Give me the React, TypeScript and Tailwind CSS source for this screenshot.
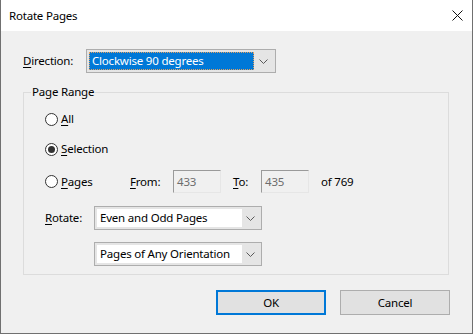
import * as React from "react";

const FONT = { fontFamily: '"Noto Sans", "Liberation Sans", sans-serif' };

function Chevron() {
  return (
    <svg width="9" height="5" viewBox="0 0 9 5" className="shrink-0">
      <path d="M0.5 0.5 L4.5 4.5 L8.5 0.5" fill="none" stroke="#5a5a5a" strokeWidth="1" />
    </svg>
  );
}

function Radio({ checked }: { checked?: boolean }) {
  return (
    <span className="relative flex h-[13px] w-[13px] shrink-0 items-center justify-center rounded-full border border-[#333333] bg-white">
      {checked && <span className="h-[7px] w-[7px] rounded-full bg-[#333333]" />}
    </span>
  );
}

function Key({ k, rest }: { k: string; rest: string }) {
  return (
    <span>
      <span className="underline underline-offset-2">{k}</span>
      {rest}
    </span>
  );
}

function Select({ value, width }: { value: string; width: string }) {
  return (
    <div className={`flex h-[24px] ${width} items-center border border-[#adadad] bg-[#e5e5e5] p-[2px]`}>
      <div className="flex h-full flex-1 items-center bg-white pl-[3px]">{value}</div>
      <div className="flex w-[17px] items-center justify-center">
        <Chevron />
      </div>
    </div>
  );
}

function Disabled({ value }: { value: string }) {
  return (
    <div className="flex h-[23px] w-[48px] items-center border-t border-l border-[#9a9a9a] border-r-[#e6e6e6] border-b-[#e6e6e6] border-r border-b bg-[#f0f0f0] pl-[3px] text-[#6d6d6d]">
      {value}
    </div>
  );
}

export default function App() {
  return (
    <div
      className="flex h-[334px] w-[473px] flex-col border-x border-b border-[#707070] text-[11.5px] leading-[16px] tracking-[-0.2px] text-black"
      style={FONT}
    >
      <div className="flex h-[31px] shrink-0 items-center justify-between bg-white pl-[8px] pr-[9px]">
        <span>Rotate Pages</span>
        <svg width="11" height="11" viewBox="0 0 11 11">
          <path d="M0.5 0.5 L10.5 10.5 M10.5 0.5 L0.5 10.5" stroke="#111" strokeWidth="1" />
        </svg>
      </div>

      <div className="flex flex-1 flex-col bg-[#f0f0f0] px-[22px] pt-[18px]">
        <div className="flex h-[24px] items-center">
          <span className="w-[63px]">
            <Key k="D" rest="irection:" />
          </span>
          <div className="flex h-[24px] w-[190px] items-center border border-[#adadad] bg-[#e5e5e5] p-[2px]">
            <div className="flex h-full flex-1 items-center border border-dotted border-[#e0a060] bg-[#0078d7] pl-[2px] text-white">
              Clockwise 90 degrees
            </div>
            <div className="flex w-[19px] items-center justify-center">
              <Chevron />
            </div>
          </div>
        </div>

        <div className="relative mt-[19px] h-[183px] w-[426px] border border-[#dcdcdc] pl-[21px] pt-[18px]">
          <span className="absolute left-[7px] top-[-9px] bg-[#f0f0f0] px-[1px]">Page Range</span>

          <div className="flex h-[16px] items-center gap-[3px]">
            <Radio />
            <Key k="A" rest="ll" />
          </div>

          <div className="mt-[14px] flex h-[16px] items-center gap-[3px]">
            <Radio checked />
            <Key k="S" rest="election" />
          </div>

          <div className="mt-[13px] flex h-[23px] items-center">
            <div className="flex w-[85px] items-center gap-[3px]">
              <Radio />
              <Key k="P" rest="ages" />
            </div>
            <span className="w-[43px]">
              <Key k="F" rest="rom:" />
            </span>
            <Disabled value="433" />
            <span className="ml-[12px] w-[28px]">
              <Key k="T" rest="o:" />
            </span>
            <Disabled value="435" />
            <span className="ml-[12px]">of 769</span>
          </div>

          <div className="mt-[13px] flex items-center">
            <span className="w-[49px]">
              <Key k="R" rest="otate:" />
            </span>
            <Select value="Even and Odd Pages" width="w-[168px]" />
          </div>

          <div className="mt-[12px] flex items-center pl-[49px]">
            <Select value="Pages of Any Orientation" width="w-[168px]" />
          </div>
        </div>

        <div className="mt-[15px] flex justify-end gap-[14px]">
          <button className="h-[25px] w-[110px] border-2 border-[#0078d7] bg-[#e1e1e1]">OK</button>
          <button className="h-[25px] w-[110px] border border-[#adadad] bg-[#e1e1e1]">Cancel</button>
        </div>
      </div>
    </div>
  );
}
